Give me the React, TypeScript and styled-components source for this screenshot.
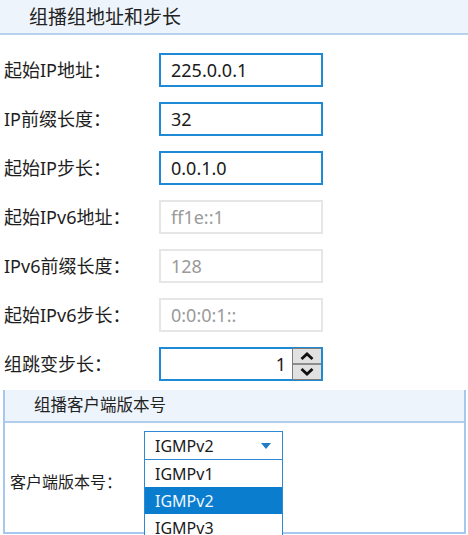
import React from "react";
import styled, { createGlobalStyle } from "styled-components";

const Global = createGlobalStyle`
  html, body { margin: 0; padding: 0; background: #fff; }
  body {
    width: 468px; height: 535px; overflow: hidden;
    font-family: "Noto Sans", "Noto Sans CJK SC", sans-serif;
    color: #1a1a1a;
  }
`;

const Page = styled.div`
  display: flex;
  flex-direction: column;
  width: 468px;
`;

const SectionHeader = styled.div`
  height: 35px;
  box-sizing: border-box;
  background: #edf4fb;
  border-bottom: 2px solid #b6d2ef;
  display: flex;
  align-items: center;
  padding: 0 0 3px 29px;
  font-family: "Noto Sans CJK SC", sans-serif;
  font-size: 19px;
  line-height: 1;
  color: #222;
`;

const Form = styled.div`
  display: flex;
  flex-direction: column;
  gap: 15px;
  padding: 18px 0 0 4px;
`;

const Row = styled.div`
  display: flex;
  align-items: center;
  height: 34px;
`;

const Label = styled.div`
  width: 155px;
  font-family: "Noto Sans", "Noto Sans CJK SC", sans-serif;
  font-size: 18px;
  line-height: 1;
  color: #1e1e1e;
`;

const Field = styled.div<{ $disabled?: boolean }>`
  width: 164px;
  height: 34px;
  box-sizing: border-box;
  border: 2px solid ${(p) => (p.$disabled ? "#e6e6e6" : "#1e8ad6")};
  display: flex;
  align-items: center;
  padding-left: 10px;
  font-size: 18px;
  line-height: 1;
  color: ${(p) => (p.$disabled ? "#9a9a9a" : "#1a1a1a")};
`;

const Spinner = styled.div`
  width: 164px;
  height: 34px;
  box-sizing: border-box;
  border: 2px solid #1e8ad6;
  display: flex;
`;

const SpinValue = styled.div`
  flex: 1;
  display: flex;
  align-items: center;
  justify-content: flex-end;
  padding-right: 6px;
  font-size: 18px;
  line-height: 1;
`;

const SpinButtons = styled.div`
  width: 28px;
  display: flex;
  flex-direction: column;
  border: 1px solid #7d7d7d;
  border-right: none;
  margin: -1px 0;
`;

const SpinBtn = styled.div<{ $top?: boolean }>`
  flex: 1;
  background: #e1e1e1;
  ${(p) => (p.$top ? "border-bottom: 2px solid #8c8c8c;" : "")}
  display: flex;
  align-items: center;
  justify-content: center;
`;

const Box = styled.div`
  margin: 9px 2px 0 3px;
  border: 2px solid #a6c8ee;
  border-top: none;
  height: 144px;
  box-sizing: border-box;
  display: flex;
  flex-direction: column;
`;

const SubHeader = styled.div`
  height: 33px;
  background: #edf4fb;
  border-bottom: 2px solid #b0cdee;
  box-sizing: border-box;
  display: flex;
  align-items: center;
  padding: 0 0 2px 29px;
  font-family: "Noto Sans CJK SC", sans-serif;
  font-size: 16.5px;
  line-height: 1;
  color: #222;
`;

const SubBody = styled.div`
  display: flex;
  align-items: flex-start;
  padding: 8px 0 0 5px;
`;

const SubLabel = styled.div`
  width: 134px;
  padding-top: 42px;
  font-family: "Noto Sans CJK SC", sans-serif;
  font-size: 16px;
  line-height: 1;
  color: #1e1e1e;
`;

const Combo = styled.div`
  position: relative;
  width: 139px;
`;

const ComboBox = styled.div`
  height: 29px;
  box-sizing: border-box;
  border: 1px solid #2f8ad3;
  display: flex;
  align-items: center;
  justify-content: space-between;
  padding: 0 11px 0 10px;
  font-size: 16px;
  line-height: 1;
`;

const List = styled.div`
  position: absolute;
  top: 100%;
  left: 0;
  right: 0;
  background: #fff;
  border-left: 1px solid #2f8ad3;
  border-right: 1px solid #2f8ad3;
  display: flex;
  flex-direction: column;
`;

const Item = styled.div<{ $selected?: boolean }>`
  height: 27px;
  display: flex;
  align-items: center;
  padding-left: 10px;
  font-size: 16px;
  line-height: 1;
  background: ${(p) => (p.$selected ? "#0a7dcf" : "#fff")};
  color: ${(p) => (p.$selected ? "#eef6ff" : "#1a1a1a")};
`;

const rows: { label: string; value: string; disabled?: boolean }[] = [
  { label: "起始IP地址：", value: "225.0.0.1" },
  { label: "IP前缀长度：", value: "32" },
  { label: "起始IP步长：", value: "0.0.1.0" },
  { label: "起始IPv6地址：", value: "ff1e::1", disabled: true },
  { label: "IPv6前缀长度：", value: "128", disabled: true },
  { label: "起始IPv6步长：", value: "0:0:0:1::", disabled: true },
];

export default function App() {
  return (
    <Page>
      <Global />
      <SectionHeader>组播组地址和步长</SectionHeader>
      <Form>
        {rows.map((r) => (
          <Row key={r.label}>
            <Label>{r.label}</Label>
            <Field $disabled={r.disabled}>{r.value}</Field>
          </Row>
        ))}
        <Row>
          <Label>组跳变步长：</Label>
          <Spinner>
            <SpinValue>1</SpinValue>
            <SpinButtons>
              <SpinBtn $top>
                <svg width="16" height="10" viewBox="0 0 16 10">
                  <path d="M2.5 8 L8 3 L13.5 8" fill="none" stroke="#111" strokeWidth="2.8" />
                </svg>
              </SpinBtn>
              <SpinBtn>
                <svg width="16" height="10" viewBox="0 0 16 10">
                  <path d="M2.5 2 L8 7 L13.5 2" fill="none" stroke="#111" strokeWidth="2.8" />
                </svg>
              </SpinBtn>
            </SpinButtons>
          </Spinner>
        </Row>
      </Form>
      <Box>
        <SubHeader>组播客户端版本号</SubHeader>
        <SubBody>
          <SubLabel>客户端版本号：</SubLabel>
          <Combo>
            <ComboBox>
              <span>IGMPv2</span>
              <svg width="10" height="6" viewBox="0 0 10 6">
                <path d="M0 0 L10 0 L5 6 Z" fill="#1e7cc8" />
              </svg>
            </ComboBox>
            <List>
              <Item>IGMPv1</Item>
              <Item $selected>IGMPv2</Item>
              <Item>IGMPv3</Item>
            </List>
          </Combo>
        </SubBody>
      </Box>
    </Page>
  );
}
